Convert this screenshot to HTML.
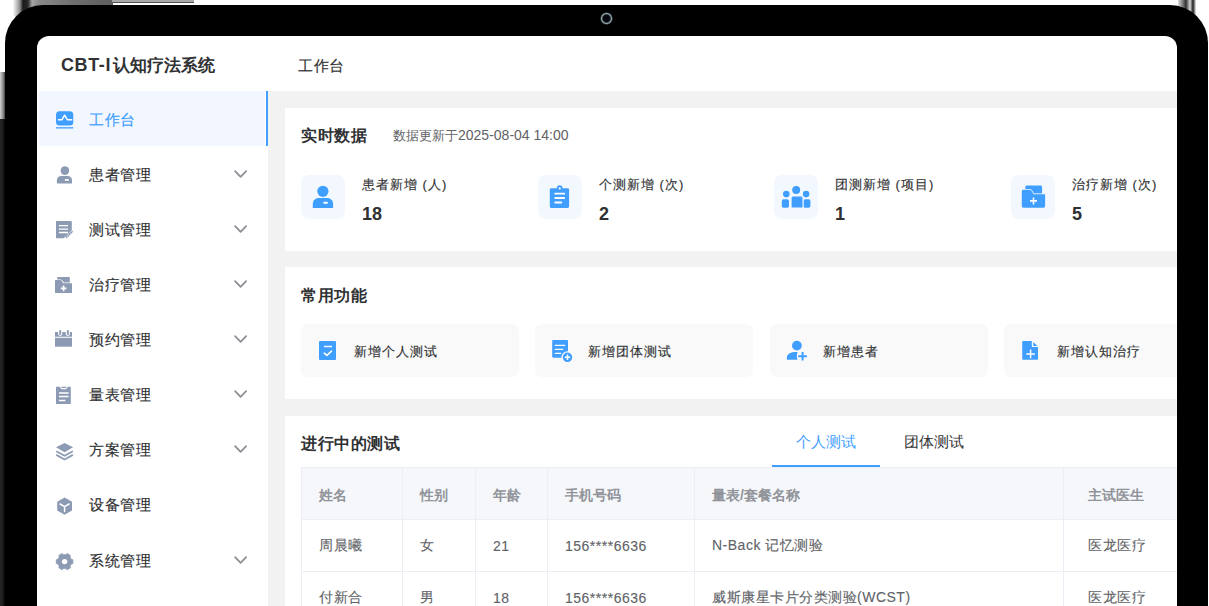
<!DOCTYPE html>
<html><head><meta charset="utf-8">
<style>
*{box-sizing:border-box;margin:0;padding:0}
html,body{width:1209px;height:606px;overflow:hidden;background:#fff;font-family:"Liberation Sans",sans-serif;}
.abs{position:absolute}
#bezel{position:absolute;left:5px;top:5px;width:1203px;height:700px;background:#000;border-radius:38px 38px 0 0;}
#screen{position:absolute;left:37px;top:36px;width:1140px;height:600px;background:#fff;border-radius:12px 12px 0 0;overflow:hidden;}
.t{position:absolute;white-space:nowrap;line-height:1}
.mi{position:relative;height:55.125px;display:flex;align-items:center;font-size:16px;color:#303133}
.mi.act{color:#409eff}
.mi .ic{position:absolute;left:19px;top:50%;margin-top:-9px;width:18px;height:18px}
.mi .ic svg{display:block;overflow:visible}
.mi .tx{position:absolute;left:52px;top:50%;margin-top:-7px;line-height:16px;font-size:15px;letter-spacing:0.5px;-webkit-text-stroke:0.15px currentColor;white-space:nowrap}
.mi .cv{position:absolute;left:195px;top:50%;margin-top:-6px;width:16px;height:12px}.mi .cv svg{display:block}
.card{position:absolute;left:248px;width:1000px;background:#fff}
.h2{font-size:16px;letter-spacing:0.55px;margin-top:1.5px;font-weight:bold;color:#303133}
.sub{font-size:13px;color:#606266}
.stat{position:absolute;top:139px;width:230px;height:44px}
.sb{position:absolute;left:0;top:0;width:44px;height:44px;border-radius:8px;background:#f3f8ff}
.sb svg{position:absolute;left:0;top:0}
.sl{position:absolute;left:61px;top:3px;font-size:13px;letter-spacing:1px;-webkit-text-stroke:0.15px currentColor;color:#303133;white-space:nowrap;line-height:14px}
.sn{position:absolute;left:61px;top:29.5px;font-size:18px;font-weight:bold;color:#303133;line-height:18px}
.qb{position:absolute;top:288px;width:218px;height:53px;border-radius:7px;background:#f9f9f9}
.qi{position:absolute;left:17px;top:16px}
.qi svg{display:block}
.qt{position:absolute;left:53px;top:21px;font-size:13px;letter-spacing:1.1px;-webkit-text-stroke:0.15px currentColor;line-height:14px;color:#303133;white-space:nowrap}
.tab{font-size:15px}
.tb{position:absolute;border-collapse:collapse;table-layout:fixed;width:962px;font-size:14px;letter-spacing:0.5px;color:#606266}
.tb td{height:52px;border:1px solid #ebeef5;padding:1px 0 0 17px;-webkit-text-stroke:0.1px currentColor;white-space:nowrap;vertical-align:middle}
.tb tr.hd td{background:#f5f7fa;color:#909399;font-weight:bold;font-size:14px;letter-spacing:0;padding:4px 0 0 17px;-webkit-text-stroke:0}
</style></head><body>
<!-- frame details -->
<div class="abs" style="left:0;top:118px;width:5px;height:488px;background:linear-gradient(90deg,#262629,#1b1b1e 60%,#000)"></div>
<div class="abs" style="left:0;top:72px;width:5px;height:47px;background:linear-gradient(90deg,#cfcfcf,#9a9a9a 50%,#444)"></div>
<div class="abs" style="left:13px;top:0;width:100px;height:16px;background:linear-gradient(90deg,#fafafa 0,#bdbdbd 4px,#8a8a8a 7px,#1a1a1a 10px,#2a2a2a 15px,#a5a5a5 19px,#8a8a8a 26px,#6e6e6e 60px,#5e5e5e 100px)"></div>
<div class="abs" style="left:112px;top:0;width:82px;height:3px;background:#a8a8a8;border-bottom:1px solid #555"></div>
<div class="abs" style="left:1178px;top:0;width:18px;height:18px;background:linear-gradient(90deg,#ddd 0,#8a8a8a 4px,#303030 8px,#d8d8d8 12px,#1e1e1e 15px,#f0f0f0 18px)"></div>
<div id="bezel"></div>
<div class="abs" style="left:600px;top:12px;width:13px;height:13px;border-radius:50%;background:radial-gradient(circle,#050510 0,#050510 3.4px,#4a5a60 4.2px,#8fa2a6 5px,#1a2022 6.2px,#000 6.8px)"></div>
<div id="screen">
  <!-- header -->
  <div class="t" style="left:24px;top:20px;font-size:18px;font-weight:bold;color:#303133"><span style="letter-spacing:0.6px">CBT-I</span><span style="font-size:17px;letter-spacing:0;margin-left:1.5px">认知疗法系统</span></div>
  <div class="t" style="left:261px;top:21.5px;font-size:15px;letter-spacing:0.5px;-webkit-text-stroke:0.15px #303133;color:#303133">工作台</div>
  <!-- sidebar -->
  <div class="abs" style="left:0;top:55px;width:231px;height:560px;background:#fff"></div>
  <div class="abs" style="left:2px;top:55px;width:226px;height:55px;background:#f2f7ff"></div>
  <div class="abs" style="left:229px;top:55px;width:2px;height:55px;background:#409eff"></div>
  <!-- sidebar items -->
  <div id="menu" class="abs" style="left:0;top:55px;width:231px">
    <div class="mi act"><span class="ic"><svg width="20" height="22" viewBox="0 0 20 22"><rect x="0" y="1.3" width="17.3" height="14.1" rx="3.5" fill="#409eff"/><path d="M2.4 9.8h3.5l2.7-4.6 2.9 4.6h4.2" fill="none" stroke="#fff" stroke-width="1.5" stroke-linejoin="round" stroke-linecap="round"/><rect x="0" y="17.2" width="17.3" height="1.3" fill="#409eff"/></svg></span><span class="tx">工作台</span></div>
    <div class="mi"><span class="ic"><svg width="20" height="22" viewBox="0 0 20 22"><circle cx="8.9" cy="5.6" r="4.3" fill="#8c9bb3"/><path d="M0.9 18.4v-3.2c0-2.4 1.9-4.3 4.3-4.3h6.5c2.4 0 4.3 1.9 4.3 4.3v3.2z" fill="#8c9bb3"/><rect x="8.9" y="14.1" width="3.9" height="1.7" fill="#fff"/></svg></span><span class="tx">患者管理</span><span class="cv"><svg width="16" height="12" viewBox="0 0 16 12"><path d="M3.1 3.2L8.6 8.9L14.1 3.2" fill="none" stroke="#8d9096" stroke-width="1.8" stroke-linecap="round" stroke-linejoin="round"/></svg></span></div>
    <div class="mi"><span class="ic"><svg width="20" height="22" viewBox="0 0 20 22"><path d="M0 2.1c0-.6.4-1 1-1h13.6c.7 0 1.2.5 1.2 1.2V9.9L7.7 18.2H0z" fill="#8c9bb3"/><path d="M2.9 5.6h9.2M2.9 9.1h9.2M2.9 12.5h9.2" stroke="#fff" stroke-width="1.3"/><path d="M10 17.5l6.6-6.5" stroke="#8c9bb3" stroke-width="2" stroke-dasharray="1.7 .45"/></svg></span><span class="tx">测试管理</span><span class="cv"><svg width="16" height="12" viewBox="0 0 16 12"><path d="M3.1 3.2L8.6 8.9L14.1 3.2" fill="none" stroke="#8d9096" stroke-width="1.8" stroke-linecap="round" stroke-linejoin="round"/></svg></span></div>
    <div class="mi"><span class="ic"><svg width="20" height="22" viewBox="0 0 20 22" style="margin-left:-1px"><path d="M2.2 2h12.6v6H9l-1.6-2.5H2.2z" fill="#8c9bb3"/><path d="M0 5.8c0-.4.4-.8.8-.8h4.6c.4 0 .8.2 1 .6l1.9 2.6H17v9.9H0z" fill="#8c9bb3" stroke="#fff" stroke-width="1.2"/><path d="M0 5.8c0-.4.4-.8.8-.8h4.6c.4 0 .8.2 1 .6l1.9 2.6H17v9.9H0z" fill="#8c9bb3"/><path d="M8.6 10.6v5.6M5.8 13.4h5.6" stroke="#fff" stroke-width="1.6"/></svg></span><span class="tx">治疗管理</span><span class="cv"><svg width="16" height="12" viewBox="0 0 16 12"><path d="M3.1 3.2L8.6 8.9L14.1 3.2" fill="none" stroke="#8d9096" stroke-width="1.8" stroke-linecap="round" stroke-linejoin="round"/></svg></span></div>
    <div class="mi"><span class="ic"><svg width="20" height="22" viewBox="0 0 20 22" style="margin-left:-1px"><path d="M0 2.1h3.1v1.6c0 1.2.9 2.1 2.1 2.1s2.1-.9 2.1-2.1V2.1h3.4v1.6c0 1.2.9 2.1 2.1 2.1s2.1-.9 2.1-2.1V2.1H17v4.7H0z" fill="#8c9bb3"/><rect x="4.2" y="0" width="2" height="4.9" rx="1" fill="#8c9bb3"/><rect x="11.9" y="0" width="2" height="4.9" rx="1" fill="#8c9bb3"/><rect x="0" y="7.8" width="17" height="8.9" fill="#8c9bb3"/></svg></span><span class="tx">预约管理</span><span class="cv"><svg width="16" height="12" viewBox="0 0 16 12"><path d="M3.1 3.2L8.6 8.9L14.1 3.2" fill="none" stroke="#8d9096" stroke-width="1.8" stroke-linecap="round" stroke-linejoin="round"/></svg></span></div>
    <div class="mi"><span class="ic"><svg width="20" height="22" viewBox="0 0 20 22"><path d="M0 1.7h3.8l1.7 2.6h4.6l1.7-2.6h3v17.2H0z" fill="#8c9bb3"/><path d="M5.1 1.8h5.6l-.8 1.2H5.9z" fill="#8c9bb3"/><path d="M3 7.9h9.6M3 11.6h9.6M3 15.6h6.4" stroke="#fff" stroke-width="1.5"/></svg></span><span class="tx">量表管理</span><span class="cv"><svg width="16" height="12" viewBox="0 0 16 12"><path d="M3.1 3.2L8.6 8.9L14.1 3.2" fill="none" stroke="#8d9096" stroke-width="1.8" stroke-linecap="round" stroke-linejoin="round"/></svg></span></div>
    <div class="mi"><span class="ic"><svg width="20" height="22" viewBox="0 0 20 22"><path d="M8.6 2.9l8.5 4.4-8.5 5-8.6-5z" fill="#8c9bb3"/><path d="M0.3 11.2l8.3 4.6 8.3-4.6" fill="none" stroke="#8c9bb3" stroke-width="1.8" stroke-linejoin="round"/><path d="M0.3 14.9l8.3 4.6 8.3-4.6" fill="none" stroke="#8c9bb3" stroke-width="1.8" stroke-linejoin="round"/></svg></span><span class="tx">方案管理</span><span class="cv"><svg width="16" height="12" viewBox="0 0 16 12"><path d="M3.1 3.2L8.6 8.9L14.1 3.2" fill="none" stroke="#8d9096" stroke-width="1.8" stroke-linecap="round" stroke-linejoin="round"/></svg></span></div>
    <div class="mi"><span class="ic"><svg width="20" height="22" viewBox="0 0 20 22"><path d="M8.6 2.4l7.4 4.3v8.7l-7.4 4.4-7.4-4.4V6.7z" fill="#8c9bb3"/><path d="M4.1 9l4.5 2.7 4.5-2.7M8.6 11.7v4.7" fill="none" stroke="#fff" stroke-width="1.5" stroke-linecap="round"/></svg></span><span class="tx">设备管理</span></div>
    <div class="mi"><span class="ic"><svg width="20" height="22" viewBox="0 0 20 22"><path d="M14.66 7.10 L15.18 8.21 L16.88 8.69 L16.88 12.51 L15.18 12.99 L14.66 14.10 L13.96 15.10 L14.40 16.82 L11.09 18.73 L9.82 17.49 L8.60 17.60 L7.38 17.49 L6.11 18.73 L2.80 16.82 L3.24 15.10 L2.54 14.10 L2.02 12.99 L0.32 12.51 L0.32 8.69 L2.02 8.21 L2.54 7.10 L3.24 6.10 L2.80 4.38 L6.11 2.47 L7.38 3.71 L8.60 3.60 L9.82 3.71 L11.09 2.47 L14.40 4.38 L13.96 6.10Z" fill="#8c9bb3" stroke="#8c9bb3" stroke-width="0.8" stroke-linejoin="round"/><circle cx="8.6" cy="10.6" r="2.7" fill="#fff"/></svg></span><span class="tx">系统管理</span><span class="cv"><svg width="16" height="12" viewBox="0 0 16 12"><path d="M3.1 3.2L8.6 8.9L14.1 3.2" fill="none" stroke="#8d9096" stroke-width="1.8" stroke-linecap="round" stroke-linejoin="round"/></svg></span></div>
  </div>
  <!-- main bg -->
  <div class="abs" style="left:231px;top:55px;width:909px;height:560px;background:#f2f2f2"></div>
  <!-- card 1 -->
  <div class="card" style="top:72px;height:143px"></div>
  <div class="t h2" style="left:264px;top:90px">实时数据</div>
  <div class="t sub" style="left:356px;top:92px">数据更新于<span style="font-size:14px">2025-08-04 14:00</span></div>
  <div class="stat" style="left:264px"><div class="sb"><svg width="44" height="44" viewBox="0 0 44 44"><circle cx="21.9" cy="16.3" r="5.6" fill="#409eff"/><path d="M11.8 33v-4.2c0-3.3 2.6-5.9 5.9-5.9h8.5c3.3 0 5.9 2.6 5.9 5.9V33z" fill="#409eff"/><rect x="22.5" y="26.8" width="4.2" height="1.9" rx=".4" fill="#fff"/></svg></div><div class="sl">患者新增 (人)</div><div class="sn">18</div></div>
  <div class="stat" style="left:501px"><div class="sb"><svg width="44" height="44" viewBox="0 0 44 44"><path d="M11.8 14.6c0-.8.6-1.4 1.4-1.4h5.6a2.9 2.9 0 0 1 5.8 0h5.1c.8 0 1.4.6 1.4 1.4v16.9c0 .8-.6 1.4-1.4 1.4H13.2c-.8 0-1.4-.6-1.4-1.4z" fill="#409eff"/><circle cx="21.7" cy="13.4" r="1.1" fill="#fff"/><rect x="16.3" y="17.7" width="10.8" height="1.9" rx=".9" fill="#fff"/><rect x="16.3" y="22.1" width="10.8" height="1.9" rx=".9" fill="#fff"/><rect x="16.3" y="26.6" width="7.9" height="1.9" rx=".9" fill="#fff"/></svg></div><div class="sl">个测新增 (次)</div><div class="sn">2</div></div>
  <div class="stat" style="left:737px"><div class="sb"><svg width="44" height="44" viewBox="0 0 44 44"><circle cx="22.2" cy="14.9" r="4" fill="#409eff"/><circle cx="12.3" cy="19.1" r="3.3" fill="#409eff"/><circle cx="32.1" cy="19.1" r="3.3" fill="#409eff"/><rect x="7.8" y="24.2" width="7.2" height="8.5" rx="1.8" fill="#409eff"/><rect x="29.2" y="24.2" width="7.2" height="8.5" rx="1.8" fill="#409eff"/><path d="M17 23c0-1.1.9-2 2-2h8.1c1.1 0 2 .9 2 2v10H17z" fill="#409eff" stroke="#f3f8ff" stroke-width="1.2"/></svg></div><div class="sl">团测新增 (项目)</div><div class="sn">1</div></div>
  <div class="stat" style="left:974px"><div class="sb"><svg width="44" height="44" viewBox="0 0 44 44"><path d="M14.3 12.2c0-.9.7-1.6 1.6-1.6h13.6c.9 0 1.6.7 1.6 1.6v6.6h-8.2l-2.2-3.6h-6.4z" fill="#409eff"/><path d="M10.8 16.3c0-.9.7-1.6 1.6-1.6h6.3c.7 0 1.2.3 1.6.9l2.3 3.7h11.5v11.8c0 .9-.7 1.6-1.6 1.6H12.4c-.9 0-1.6-.7-1.6-1.6z" fill="#409eff" stroke="#f3f8ff" stroke-width="1.4"/><path d="M10.8 16.3c0-.9.7-1.6 1.6-1.6h6.3c.7 0 1.2.3 1.6.9l2.3 3.7h11.5v11.8c0 .9-.7 1.6-1.6 1.6H12.4c-.9 0-1.6-.7-1.6-1.6z" fill="#409eff"/><path d="M22.5 22.4v7M19 25.9h7" stroke="#fff" stroke-width="1.6"/></svg></div><div class="sl">治疗新增 (次)</div><div class="sn">5</div></div>

  <!-- card 2 -->
  <div class="card" style="top:231px;height:132px"></div>
  <div class="t h2" style="left:264px;top:250px">常用功能</div>
  <div class="qb" style="left:264px"><span class="qi"><svg width="18" height="20" viewBox="0 0 18 20"><rect x="1" y="1" width="17" height="19" rx="1" fill="#409eff"/><path d="M6.6 6.6h6.8" stroke="#fff" stroke-width="1.5" stroke-linecap="round"/><path d="M6.3 13.2l2.6 2.1 4.6-4.2" fill="none" stroke="#fff" stroke-width="1.6" stroke-linecap="round" stroke-linejoin="round"/></svg></span><span class="qt">新增个人测试</span></div>
  <div class="qb" style="left:498px"><span class="qi" style="left:16px;top:16px"><svg width="24" height="24" viewBox="0 0 24 24"><path d="M1.2 1.2c0-.7.5-1.2 1.2-1.2h13.4c.7 0 1.2.5 1.2 1.2v16.6H2.4c-.7 0-1.2-.5-1.2-1.2z" fill="#409eff"/><path d="M4.3 5.4h9.4M4.3 9.4h7.4M4.3 13.3h5.4" stroke="#fff" stroke-width="1.3" stroke-linecap="round"/><circle cx="16.5" cy="17.3" r="5.4" fill="#409eff" stroke="#f9f9f9" stroke-width="1.3"/><path d="M16.5 14.6v5.4M13.8 17.3h5.4" stroke="#fff" stroke-width="1.5"/></svg></span><span class="qt">新增团体测试</span></div>
  <div class="qb" style="left:733px"><span class="qi" style="left:16px"><svg width="22" height="22" viewBox="0 0 22 22"><circle cx="10.9" cy="5.6" r="4.9" fill="#409eff"/><path d="M0.9 19.8v-2.4c0-2.9 3.2-5.4 8.4-5.4h2.6c-1 1.2-1.5 3.4-.4 7.8z" fill="#409eff"/><path d="M16.6 12v8.6M12.3 16.3h8.6" stroke="#409eff" stroke-width="2"/></svg></span><span class="qt">新增患者</span></div>
  <div class="qb" style="left:967px"><span class="qi"><svg width="20" height="22" viewBox="0 0 20 22"><path d="M1.2 1.9c0-.6.4-1 1-1h8.6v5.2c0 .6.4 1 1 1H17v11.7c0 .6-.4 1-1 1H2.2c-.6 0-1-.4-1-1z" fill="#409eff"/><path d="M12.3 1.9l4.2 4.1h-4.2z" fill="#409eff"/><path d="M9.6 9.6v8.6M5.3 13.9h8.6" stroke="#fff" stroke-width="1.5"/></svg></span><span class="qt">新增认知治疗</span></div>

  <!-- card 3 -->
  <div class="card" style="top:380px;height:300px"></div>
  <div class="t h2" style="left:264px;top:398px">进行中的测试</div>
  <div class="t tab" style="left:735px;top:398px;width:108px;text-align:center;color:#409eff">个人测试</div>
  <div class="t tab" style="left:843px;top:398px;width:108px;text-align:center;color:#303133">团体测试</div>
    <table class="tb" style="left:264px;top:431px">
    <tr class="hd"><td style="width:101px">姓名</td><td style="width:73px">性别</td><td style="width:72px">年龄</td><td style="width:147px">手机号码</td><td style="width:369px">量表/套餐名称</td><td style="width:200px;padding-left:24px">主试医生</td></tr>
    <tr><td>周晨曦</td><td>女</td><td>21</td><td>156****6636</td><td>N-Back 记忆测验</td><td style="padding-left:24px">医龙医疗</td></tr>
    <tr><td>付新合</td><td>男</td><td>18</td><td>156****6636</td><td>威斯康星卡片分类测验(WCST)</td><td style="padding-left:24px">医龙医疗</td></tr>
  </table>
  <div class="abs" style="left:735px;top:428.6px;width:108px;height:2.4px;background:#409eff;z-index:2"></div>
</div>
</body></html>
